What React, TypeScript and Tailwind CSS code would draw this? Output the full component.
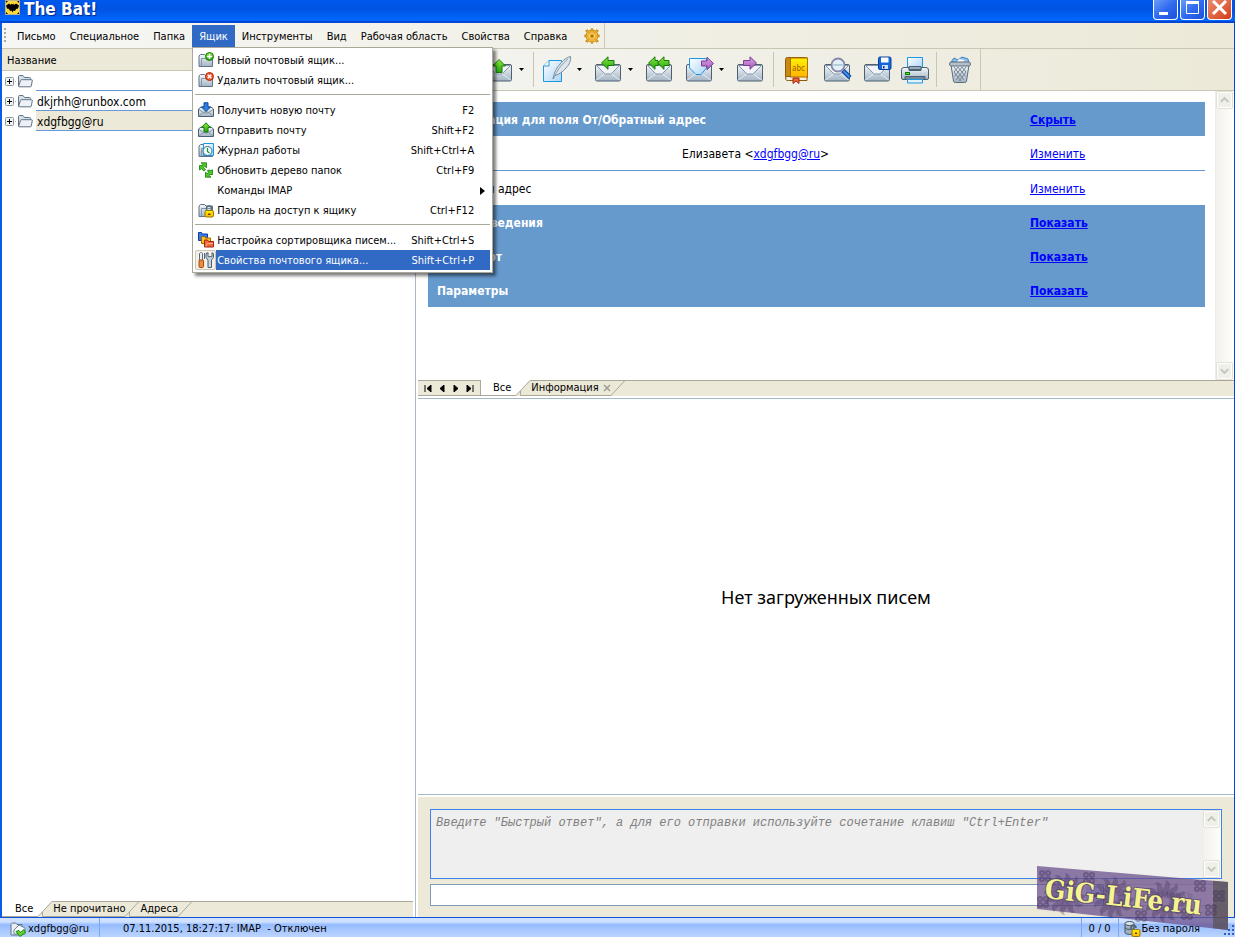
import { useState } from 'react'
import type { ReactNode } from 'react'
import clsx from 'clsx'

/* ─────────────── data ─────────────── */

type MenuEntry = { label: string; keys?: string; icon?: ReactNode; submenu?: boolean; active?: boolean } | null

const MENU_BEFORE = ['Письмо', 'Специальное', 'Папка']
const MENU_AFTER = ['Инструменты', 'Вид', 'Рабочая область', 'Свойства', 'Справка']

const MAILBOX_MENU: MenuEntry[] = [
  { label: 'Новый почтовый ящик...', icon: <FolderBadge kind="add" /> },
  { label: 'Удалить почтовый ящик...', icon: <FolderBadge kind="remove" /> },
  null,
  { label: 'Получить новую почту', keys: 'F2', icon: <SmallMail dir="down" /> },
  { label: 'Отправить почту', keys: 'Shift+F2', icon: <SmallMail dir="up" /> },
  { label: 'Журнал работы', keys: 'Shift+Ctrl+A', icon: <FolderBadge kind="log" /> },
  { label: 'Обновить дерево папок', keys: 'Ctrl+F9', icon: <RefreshIcon /> },
  { label: 'Команды IMAP', submenu: true },
  { label: 'Пароль на доступ к ящику', keys: 'Ctrl+F12', icon: <FolderBadge kind="lock" /> },
  null,
  { label: 'Настройка сортировщика писем...', keys: 'Shift+Ctrl+S', icon: <SorterIcon /> },
  { label: 'Свойства почтового ящика...', keys: 'Shift+Ctrl+P', icon: <ToolsIcon />, active: true },
]

const ACCOUNTS = [
  { id: 'empty', name: '' },
  { id: 'runbox', name: 'dkjrhh@runbox.com' },
  { id: 'ru', name: 'xdgfbgg@ru', selected: true },
]

/* ─────────────── page ─────────────── */

export default function App() {
  return (
    <div className="flex h-screen flex-col overflow-hidden bg-white font-['DejaVu_Sans_Condensed','Noto_Sans',sans-serif] text-[11px] leading-[14px] text-black">
      <Gradients />
      <TitleBar />
      <div className="flex min-h-0 flex-1 flex-col border-r border-l-2 border-r-[#0046e0] border-l-[#0a5be6]">
        <MenuBar />
        <div className="flex min-h-0 flex-1">
          <FolderPane />
          <main className="flex min-w-0 flex-1 flex-col border-l border-[#aabac8] pl-[2px]">
            <Toolbar />
            <AccountInfo />
            <MessageTabs />
            <section className="flex min-h-0 flex-1 items-center justify-center border-y border-[#a3b9c6] font-['Noto_Sans'] text-[18px]">
              Нет загруженных писем
            </section>
            <QuickReply />
          </main>
        </div>
      </div>
      <StatusBar />
    </div>
  )
}

function TitleBar() {
  return (
    <header className="flex h-[23px] shrink-0 items-start bg-linear-to-b from-[#0058ec] via-[#0054e4] via-45% to-[#0068ff] border-b-2 border-[#0046d6] pr-[3px] pl-[5px]">
      <BatLogo />
      <h1 className="ml-1 flex-1 text-[17px] leading-[18px] font-bold text-white [text-shadow:1px_1px_1px_#00258a]">
        The Bat!
      </h1>
      <div className="flex gap-[2px]">
        <WindowButton label="Свернуть">
          <rect x="5" y="12" width="9" height="3" fill="#fff" />
        </WindowButton>
        <WindowButton label="Развернуть">
          <path d="M5.500 2v11.500h12V2" fill="none" stroke="#fff" />
          <path d="M5 1h13v3H5z" fill="#fff" />
        </WindowButton>
        <WindowButton label="Закрыть" close>
          <path d="M5 1l13 13M18 1L5 14" stroke="#fff" strokeWidth="3" />
        </WindowButton>
      </div>
    </header>
  )
}

function WindowButton({ label, close, children }: { label: string; close?: boolean; children: ReactNode }) {
  return (
    <button
      aria-label={label}
      className={clsx(
        'h-5 w-[25px] rounded-b-[4px] border border-t-0 border-white',
        close ? 'bg-linear-to-br from-[#ee8a6c] to-[#d23a10]' : 'bg-linear-to-br from-[#6c9cf6] via-[#2f6af0] to-[#1e50d8]',
      )}
    >
      <svg width="23" height="19" viewBox="0 0 23 19">{children}</svg>
    </button>
  )
}

/* ─────────────── menu bar ─────────────── */

function MenuBar() {
  const [open, setOpen] = useState(true)
  return (
    <nav className="flex h-[26px] shrink-0 items-center border-b border-[#c9c6b4] bg-linear-to-r from-[#f6f6f4] to-[#ece9d8]">
      <div className="flex h-full items-center border-r border-[#cbc8b5] pr-1">
        <Grip />
        {MENU_BEFORE.map((m) => (
          <MenuButton key={m} label={m} />
        ))}
        <div className="relative">
          <MenuButton label="Ящик" active={open} onClick={() => setOpen((v) => !v)} />
          {open && <MailboxMenu />}
        </div>
        {MENU_AFTER.map((m) => (
          <MenuButton key={m} label={m} />
        ))}
        <button aria-label="RitLabs" className="ml-[10px]">
          <WheelIcon />
        </button>
      </div>
    </nav>
  )
}

function MenuButton({ label, active, onClick }: { label: string; active?: boolean; onClick?: () => void }) {
  return (
    <button
      onClick={onClick}
      className={clsx('h-[22px] px-[7px] pt-[2px] whitespace-nowrap', active && 'bg-[#316ac5] text-white')}
    >
      {label}
    </button>
  )
}

function MailboxMenu() {
  return (
    <div
      role="menu"
      className="absolute top-full left-0 z-20 w-[301px] border border-[#aca899] bg-white p-[2px] shadow-[3px_3px_3px_rgba(0,0,0,0.5)]"
    >
      {MAILBOX_MENU.map((item, i) =>
        item === null ? (
          <div key={i} role="separator" className="flex h-[10px] items-center">
            <div className="h-px flex-1 bg-[#aca899]" />
          </div>
        ) : (
          <button key={item.label} role="menuitem" className="flex h-5 w-full items-center text-left whitespace-nowrap">
            <span
              className={clsx(
                'flex h-5 w-[21px] shrink-0 items-center justify-center',
                item.active && 'rounded-[2px] border border-[#c9c6b4] bg-[#f3f1e8]',
              )}
            >
              {item.icon}
            </span>
            <span className={clsx('flex h-5 flex-1 items-center pt-[2px] pl-px', item.active && 'bg-[#316ac5] text-white')}>
              <span className="flex-1">{item.label}</span>
              <span className={clsx(item.submenu ? 'pr-[5px]' : 'pr-4')}>
                {item.submenu ? (
                  <svg width="5" height="8" viewBox="0 0 5 8"><path d="M0 0l5 4-5 4z" /></svg>
                ) : (
                  item.keys
                )}
              </span>
            </span>
          </button>
        ),
      )}
    </div>
  )
}

/* ─────────────── folders ─────────────── */

function FolderPane() {
  return (
    <aside className="mr-[2px] flex w-[411px] shrink-0 flex-col">
      <div className="flex h-[22px] shrink-0 items-center border-b border-[#c9c6b4] bg-[#ece9d8] pt-[2px] pl-[5px]">Название</div>
      <ul className="min-h-0 flex-1 text-[12px]">
        {ACCOUNTS.map((a) => (
          <li key={a.id} className="flex h-5 items-center pl-[3px]">
            <button aria-label={`Развернуть ${a.name}`}>
              <svg width="12" height="9" viewBox="0 0 12 9">
                <rect x=".5" y=".5" width="8" height="8" rx="1" fill="#f4f2ec" stroke="#8296ad" />
                <path d="M2 4.500h5M4.500 2v5" stroke="#000" />
                <path d="M10 4.500h1" stroke="#aca899" />
              </svg>
            </button>
            <FolderIcon />
            <span
              className={clsx(
                'ml-[3px] flex h-5 flex-1 items-center border-b border-[#6a97d8] pt-[2px] pl-px',
                a.selected && 'bg-[#ece9d8]',
              )}
            >
              {a.name}
            </span>
          </li>
        ))}
      </ul>
      <div className="flex h-4 shrink-0 bg-[#ece9d8]">
        <button className="border-b border-[#aca899] bg-white pr-[5px] pl-[13px]">Все</button>
        <TabEdge first />
        <SlantTab>Не прочитано</SlantTab>
        <TabEdge />
        <SlantTab>Адреса</SlantTab>
        <TabEdge last />
        <div className="flex-1 border-t border-[#aca899]" />
      </div>
    </aside>
  )
}

function SlantTab({ children }: { children: ReactNode }) {
  return (
    <button className="flex items-center gap-[4px] border-y border-[#aca899] pl-px whitespace-nowrap">{children}</button>
  )
}

function TabEdge({ first, last }: { first?: boolean; last?: boolean }) {
  return (
    <svg className="shrink-0" width="14" height="16" viewBox="0 0 14 16">
      {first && <path d="M0 0h14L0 15.500z" fill="#fff" />}
      <path d={first ? 'M0 15.500L14 .5' : 'M0 15.500L14 .5M0 .5h14'} fill="none" stroke="#aca899" />
      {!last && <path d="M4.500 11v4.500H14" fill="none" stroke="#aca899" />}
    </svg>
  )
}

/* ─────────────── toolbar ─────────────── */

function Toolbar() {
  return (
    <div className="flex h-[42px] shrink-0 border-b border-[#c9c6b4] bg-linear-to-r from-[#f4f4f1] to-[#ece9d8]">
      <div className="flex items-center border-r border-[#cbc8b5] pl-[10px]">
        <ToolButton label="Получить почту" menu><MailIcon badge="down" /></ToolButton>
        <ToolButton label="Отправить почту" menu><MailIcon badge="up" /></ToolButton>
        <ToolDivider />
        <ToolButton label="Новое письмо" menu><QuillIcon /></ToolButton>
        <ToolButton label="Ответить" menu><MailIcon badge="reply" /></ToolButton>
        <ToolButton label="Ответить всем"><MailIcon badge="replyAll" /></ToolButton>
        <ToolButton label="Переслать" menu><MailIcon badge="forward" /></ToolButton>
        <ToolButton label="Перенаправить"><MailIcon badge="redirect" /></ToolButton>
        <ToolDivider />
        <ToolButton label="Адресная книга"><BookIcon /></ToolButton>
        <ToolButton label="Просмотр"><MailIcon badge="search" /></ToolButton>
        <ToolButton label="Сохранить"><MailIcon badge="save" /></ToolButton>
        <ToolButton label="Печать" narrow><PrinterIcon /></ToolButton>
        <ToolDivider />
        <ToolButton label="Удалить"><TrashIcon /></ToolButton>
      </div>
    </div>
  )
}

function ToolButton({ label, menu, narrow, children }: { label: string; menu?: boolean; narrow?: boolean; children: ReactNode }) {
  return (
    <>
      <button aria-label={label} className={clsx('flex h-9 items-center justify-center', narrow ? 'w-9' : 'w-10')}>
        {children}
      </button>
      {menu && (
        <button aria-label={`${label}: меню`} className="mr-[3px] flex h-9 w-2 items-center">
          <svg width="5" height="3" viewBox="0 0 5 3"><path d="M0 0h5L2.500 3z" /></svg>
        </button>
      )}
    </>
  )
}

function ToolDivider() {
  return <div className="mx-[3px] h-[35px] w-px bg-[#c9c5b2]" />
}

function Grip() {
  return (
    <svg className="mr-[2px] ml-[2px]" width="4" height="16" viewBox="0 0 4 16" fill="#aba898">
      <path d="M0 0h2v2H0zM0 4h2v2H0zM0 8h2v2H0zM0 12h2v2H0z" />
    </svg>
  )
}

/* ─────────────── account info ─────────────── */

const LINK = 'text-[#0000ff] underline'

function AccountInfo() {
  return (
    <section className="flex h-[289px] shrink-0">
      <div className="min-w-0 flex-1 px-[10px] pt-[11px]">
        <table className="w-full table-fixed border-collapse text-[12px] [&_td]:px-[9px] [&_td]:pt-[2px] [&_th]:px-[9px] [&_th]:pt-[2px]">
          <colgroup>
            <col />
            <col className="w-[348px]" />
            <col className="w-[184px]" />
          </colgroup>
          <tbody>
            <BandRow title="Информация для поля От/Обратный адрес" action="Скрыть" />
            <tr className="h-[34px] border-b border-[#6699cc]">
              <td>Имя</td>
              <td>
                Елизавета &lt;<a href="#mail" className={LINK}>xdgfbgg@ru</a>&gt;
              </td>
              <td><a href="#name" className={LINK}>Изменить</a></td>
            </tr>
            <tr className="h-[35px]">
              <td>Обратный адрес</td>
              <td />
              <td><a href="#reply" className={LINK}>Изменить</a></td>
            </tr>
            <BandRow title="Общие сведения" action="Показать" />
            <BandRow title="Транспорт" action="Показать" />
            <BandRow title="Параметры" action="Показать" />
          </tbody>
        </table>
      </div>
      <ScrollTrack />
    </section>
  )
}

function BandRow({ title, action }: { title: string; action: string }) {
  return (
    <tr className="h-[34px] bg-[#6699cc] font-bold">
      <th colSpan={2} className="text-left text-white">{title}</th>
      <td><a href="#section" className={LINK}>{action}</a></td>
    </tr>
  )
}

function ScrollTrack() {
  return (
    <div className="flex w-[19px] shrink-0 flex-col justify-between border-l border-[#eeede5] bg-linear-to-r from-[#f3f1ec] to-[#fefefb]">
      <ScrollButton label="Вверх" d="M4 10l4-4 4 4" />
      <ScrollButton label="Вниз" d="M4 6l4 4 4-4" />
    </div>
  )
}

function ScrollButton({ label, d }: { label: string; d: string }) {
  return (
    <button
      aria-label={label}
      className="flex h-[18px] w-[17px] items-center justify-center rounded-[2px] border border-[#e2e1d4] bg-[#f0f0ea] ring-1 ring-white ring-inset"
    >
      <svg width="15" height="16" viewBox="0 0 16 16">
        <path d={d} fill="none" stroke="#c6c5ba" strokeWidth="2.2" />
      </svg>
    </button>
  )
}

function MessageTabs() {
  return (
    <div className="mb-[2px] flex h-4 shrink-0 bg-[#ece9d8]">
      <div className="flex w-[63px] items-center justify-between border border-l-0 border-[#aca899] px-[6px]">
        <NavButton label="Первая" d="M1 0v7M7 0v7L3 3.500z" />
        <NavButton label="Назад" d="M6 0v7L2 3.500z" />
        <NavButton label="Вперёд" d="M2 0v7l4-3.500z" />
        <NavButton label="Последняя" d="M7 0v7M1 0v7l4-3.500z" />
      </div>
      <button className="border-b border-[#aca899] bg-white pr-[5px] pl-3">Все</button>
      <TabEdge first />
      <SlantTab>
        Информация
        <svg width="8" height="8" viewBox="0 0 8 8"><path d="M1 1l6 6M7 1L1 7" stroke="#a19f93" strokeWidth="1.600" /></svg>
      </SlantTab>
      <TabEdge last />
      <div className="flex-1 border-t border-[#aca899]" />
    </div>
  )
}

function NavButton({ label, d }: { label: string; d: string }) {
  return (
    <button aria-label={label}>
      <svg width="8" height="7" viewBox="0 0 8 7"><path d={d} fill="#000" stroke="#000" strokeWidth="1" /></svg>
    </button>
  )
}

/* ─────────────── quick reply ─────────────── */

function QuickReply() {
  return (
    <form className="relative mt-[2px] shrink-0 bg-[#ece9d8] px-3 pt-3 pb-[11px]">
      <div className="flex h-[70px] border border-[#3b82f0] bg-[#efefef]">
        <textarea
          aria-label="Быстрый ответ"
          className="min-w-0 flex-1 resize-none overflow-hidden px-[5px] py-[6px] font-['Liberation_Mono',monospace] text-[12px] leading-[15px] text-[#808080] italic outline-none placeholder:text-[#808080]"
          placeholder={'Введите "Быстрый ответ", а для его отправки используйте сочетание клавиш "Ctrl+Enter"'}
        />
        <ScrollTrack />
      </div>
      <div className="mt-[5px] flex h-[22px] gap-1">
        <div className="relative flex-1">
          <select aria-label="Шаблон" className="h-full w-full appearance-none border border-[#7f9db9] bg-white" />
          <span className="pointer-events-none absolute inset-y-[2px] right-[2px] flex w-4 items-center justify-center rounded-[2px] bg-[#c6d5f9]">
            <svg width="9" height="6" viewBox="0 0 9 6"><path d="M.5.5l4 4 4-4" fill="none" stroke="#4d6185" strokeWidth="2" /></svg>
          </span>
        </div>
        <button type="button" disabled className="w-[114px] rounded-[2px] border border-[#c9c7ba] bg-[#f5f4ea] text-[#a1a192]">
          Отправить
        </button>
      </div>
      <Watermark />
    </form>
  )
}

function Watermark() {
  return (
    <svg className="pointer-events-none absolute right-[5px] bottom-[-14px] z-10" width="192" height="65" viewBox="0 0 192 65">
      <path d="M0 0l191 16v48L0 43z" fill="#69508c" fillOpacity=".75" />
      <path d="M176 14.700l15 1.300v48l-15-1.700z" fill="#55504e" fillOpacity=".65" />
      <g fill="#3b2c56" fillOpacity=".3">
        {[28, 76, 128].map((x) => (
          <g key={x} transform={`translate(${x} ${26 + x / 14})`}>
            {[0, 30, 60, 90, 120, 150, 180, 210, 240, 270, 300, 330].map((a) => (
              <path key={a} d="M0-4c4-3 2-7 5-10 1-3-1-7-5-7 2 3 0 5-2 8s-1 6 2 9z" transform={`rotate(${a})`} />
            ))}
          </g>
        ))}
        {[[163, 20], [150, 48], [174, 44], [182, 30], [8, 10], [6, 36], [52, 12], [104, 50]].map(([x, y]) => (
          <g key={x} transform={`translate(${x} ${y})`} fill="none" stroke="#3b2c56" strokeOpacity=".4" strokeWidth="2">
            <circle cx="-3" cy="-3" r="2" />
            <circle cx="3" cy="-3" r="2" />
            <circle cx="-3" cy="3" r="2" />
            <circle cx="3" cy="3" r="2" />
          </g>
        ))}
      </g>
      <text
        x="7"
        y="32"
        transform="rotate(6 7 32)"
        fontFamily="DejaVu Serif Condensed, DejaVu Serif, serif"
        fontWeight="700"
        fontSize="27"
        fill="#f6f48e"
        stroke="#4a3a5c"
        strokeOpacity=".6"
        strokeWidth="2"
        paintOrder="stroke"
      >
        GiG-LiFe.ru
      </text>
    </svg>
  )
}

function StatusBar() {
  return (
    <footer className="flex h-5 shrink-0 items-center border-t border-[#0a56d6] bg-linear-to-b from-[#cfe1ff] from-20% via-[#96bcff] via-35% to-[#bcd5ff] pl-[10px]">
      <div className="flex h-full w-[90px] items-center gap-[2px] border-r border-[#7da7ee] pt-[2px]">
        <SyncFolderIcon />
        xdgfbgg@ru
      </div>
      <div className="flex h-full flex-1 items-center pt-[2px] pl-[23px] whitespace-pre">07.11.2015, 18:27:17: IMAP  - Отключен</div>
      <div className="flex h-full w-[38px] items-center justify-center border-x border-[#7da7ee] pt-[2px]">0 / 0</div>
      <div className="flex h-full items-center pt-[2px] pl-[5px]">
        <DatabaseLockIcon />
        Без пароля
      </div>
      <svg className="ml-[22px] self-end" width="13" height="13" viewBox="0 0 13 13" fill="#2c5fc4">
        <path d="M10 1h2v2h-2zM10 5h2v2h-2zM6 5h2v2H6zM10 9h2v2h-2zM6 9h2v2H6zM2 9h2v2H2z" />
      </svg>
    </footer>
  )
}

/* ─────────────── icons ─────────────── */

// shared paint servers, referenced by id from every icon below
function Gradients() {
  return (
    <svg className="absolute" width="0" height="0" aria-hidden>
      <defs>
        <linearGradient id="steel" x1="0" y1="0" x2="0" y2="1">
          <stop offset="0" stopColor="#f4f8fb" />
          <stop offset="1" stopColor="#a3b4c4" />
        </linearGradient>
        <linearGradient id="green" x1="0" y1="0" x2="0" y2="1">
          <stop offset="0" stopColor="#8be83c" />
          <stop offset="1" stopColor="#23a512" />
        </linearGradient>
        <linearGradient id="purple" x1="0" y1="0" x2="0" y2="1">
          <stop offset="0" stopColor="#dda4ea" />
          <stop offset="1" stopColor="#a457b5" />
        </linearGradient>
        <linearGradient id="paper" x1="0" y1="0" x2="1" y2="1">
          <stop offset="0" stopColor="#ffffff" />
          <stop offset="1" stopColor="#a9d4f7" />
        </linearGradient>
        <linearGradient id="gold" x1="0" y1="0" x2="0" y2="1">
          <stop offset="0" stopColor="#fff200" />
          <stop offset="1" stopColor="#ffb400" />
        </linearGradient>
      </defs>
    </svg>
  )
}

type Badge = 'down' | 'up' | 'reply' | 'replyAll' | 'forward' | 'redirect' | 'search' | 'save'

function MailIcon({ badge }: { badge: Badge }) {
  return (
    <svg width="30" height="28" viewBox="0 0 30 28">
      <path d="M4 8.500h22a1.500 1.500 0 011.500 1.500v13.500A1.500 1.500 0 0126 25H4a1.500 1.500 0 01-1.500-1.500V10A1.500 1.500 0 014 8.500z" fill="url(#steel)" stroke="#4d6173" />
      {badge === 'forward' ? (
        <path d="M5.500 12V2.500h17V12L17 18.500h-5z" fill="url(#paper)" stroke="#1f97e0" />
      ) : (
        <path d="M3.500 9.500L12 18h6l8.500-8.500z" fill="#f0f4f8" stroke="#8797a7" />
      )}
      <path d="M3.500 24l8-6M26.500 24l-8-6" stroke="#e6edf3" />
      {badge === 'down' && <path d="M15 15L9 8.500h3.500V1.500h5v7H21z" fill="#2f7fe0" stroke="#0b4499" />}
      {badge === 'up' && <path d="M15 3.500l6.500 6.500H18v6.500h-6V10H8.500z" fill="url(#green)" stroke="#147a0a" />}
      {badge === 'reply' && <path d="M8.500 7L15 .8v3.700h6v5h-6v3.800z" fill="url(#green)" stroke="#147a0a" />}
      {badge === 'replyAll' && (
        <>
          <path d="M13.500 7L20 .8v3.700h5v5h-5v3.800z" fill="url(#green)" stroke="#147a0a" />
          <path d="M4.500 7L11 .8v3.700h3v5h-3v3.800z" fill="url(#green)" stroke="#147a0a" />
        </>
      )}
      {badge === 'forward' && <path d="M29.500 7.500L23 1.300V5h-5.500v5H23v3.700z" fill="url(#purple)" stroke="#7a3f8c" />}
      {badge === 'redirect' && <path d="M21.500 7L15 .8v3.700H8.500v5H15v3.800z" fill="url(#purple)" stroke="#7a3f8c" />}
      {badge === 'search' && (
        <>
          <path d="M21 14.500l7 7" stroke="#0b4499" strokeWidth="4.500" />
          <path d="M21.500 15l6 6" stroke="#3e93ee" strokeWidth="2" />
          <circle cx="16" cy="9" r="6.500" fill="#dff0f8" fillOpacity=".9" stroke="#8a86a8" strokeWidth="1.800" />
          <path d="M11.500 9h9" stroke="#8fb7c4" />
        </>
      )}
      {badge === 'save' && (
        <>
          <rect x="16.500" y="1" width="12.500" height="12.500" rx="1.500" fill="#1668d8" stroke="#0b3f98" />
          <path d="M19 1.500h7.500v5H19z" fill="#fff" />
          <path d="M20 9h6v4h-6z" fill="#cfe0f5" />
          <path d="M21 10h1.500v2.500H21z" fill="#0b3f98" />
        </>
      )}
    </svg>
  )
}

function QuillIcon() {
  return (
    <svg width="30" height="28" viewBox="0 0 30 28">
      <path d="M7 4.500h12.500v21h-18V10z" fill="url(#paper)" stroke="#1f97e0" />
      <path d="M7 4.500V10H1.500" fill="#fff" stroke="#1f97e0" />
      <path d="M11 23c1-5 2-9 6-13.500C20 5 24 1.500 28.500.5c.5 4-1 8-4.500 11.500-3.500 4-7 6.500-11 7.500z" fill="#dde5ec" stroke="#7b8c9b" />
      <path d="M11.500 22.500C15 14 20 8 26 3" fill="none" stroke="#8d9dab" />
    </svg>
  )
}

function BookIcon() {
  return (
    <svg width="26" height="30" viewBox="0 0 26 30">
      <rect x="1.500" y="2.500" width="22" height="21" rx="2" fill="#c98a12" stroke="#8f5a05" />
      <path d="M3 21.500h20v4H4.500a2 2 0 01-1.500-4z" fill="#f4f0e0" stroke="#8f5a05" />
      <rect x="6.500" y="3" width="17" height="19" fill="url(#gold)" stroke="#a96f08" />
      <text x="8" y="16" fontFamily="DejaVu Sans Condensed, Noto Sans" fontSize="8" fill="#9a5c00">abc</text>
      <path d="M9 23h6v5.500l-3-2.500-3 2.500z" fill="#f0653a" stroke="#a02a10" />
    </svg>
  )
}

function PrinterIcon() {
  return (
    <svg width="30" height="28" viewBox="0 0 30 28">
      <path d="M7.500 1.500h15V12h-15z" fill="url(#paper)" stroke="#1f97e0" />
      <path d="M4 11.500h5v3h12v-3h5a2.500 2.500 0 012.500 2.500v8a1.500 1.500 0 01-1.500 1.500H3A1.500 1.500 0 011.500 22v-8A2.500 2.500 0 014 11.500z" fill="url(#steel)" stroke="#4d6173" />
      <path d="M9 10.500h12v3H9z" fill="#9aabbb" stroke="#4d6173" />
      <path d="M5 20.500h20v3H5z" fill="#75879a" stroke="#4d6173" />
      <rect x="5.500" y="16.500" width="4" height="2" fill="#51e02a" stroke="#147a0a" />
      <path d="M7.500 23.500h15v3.500h-15z" fill="#e2f2fd" stroke="#1f97e0" />
    </svg>
  )
}

function TrashIcon() {
  return (
    <svg width="24" height="28" viewBox="0 0 24 28">
      <path d="M3 6l3-4 4 2 4-3 6 2 1 4z" fill="#8fc0ee" stroke="#3d80c4" />
      <path d="M9 6l2-3 5 1 1 3z" fill="#fff" />
      <path d="M3 9h18l-2.500 16a2 2 0 01-2 1.500h-9a2 2 0 01-2-1.500z" fill="url(#steel)" stroke="#5c6b79" />
      <path d="M6 11l10 13M10 11l7.500 9.500M14 11l4 5M6 16l7 9M18 11L8 24M14 11l-7.500 9.500M10 11l-4 5M18 16l-7 9" stroke="#6f7e8c" strokeWidth=".9" />
      <rect x="1.500" y="6" width="21" height="4" rx="2" fill="#b4c0ca" stroke="#5c6b79" />
    </svg>
  )
}

function FolderIcon() {
  return (
    <svg className="shrink-0" width="16" height="16" viewBox="0 0 16 16">
      <path d="M1.500 13V3.500a1 1 0 011-1h3.500l1.500 2h5a1 1 0 011 1V7" fill="#d5dee6" stroke="#5f7488" />
      <path d="M1.500 13.500L3.500 7.500a1 1 0 011-.8h10a.8.8 0 01.8 1L14.300 13a1 1 0 01-1 .8H2z" fill="#eef2f6" stroke="#5f7488" />
    </svg>
  )
}

function FolderBadge({ kind }: { kind: 'add' | 'remove' | 'log' | 'lock' }) {
  return (
    <svg width="16" height="16" viewBox="0 0 16 16">
      <path d="M1 14.500V4L2.500 2.500h4L8 4h6.500v10.500z" fill="url(#steel)" stroke="#5f7488" />
      <path d="M3.500 14V6.500H14" fill="none" stroke="#8395a6" />
      {kind === 'add' && (
        <>
          <circle cx="11.500" cy="4.500" r="4" fill="url(#green)" stroke="#147a0a" />
          <path d="M9 4.500h5M11.500 2v5" stroke="#fff" strokeWidth="1.500" />
        </>
      )}
      {kind === 'remove' && (
        <>
          <circle cx="11.500" cy="4.500" r="4" fill="#ee5a30" stroke="#b0260c" />
          <path d="M9.700 2.700l3.600 3.600M13.300 2.700L9.700 6.300" stroke="#fff" strokeWidth="1.500" />
        </>
      )}
      {kind === 'log' && (
        <>
          <path d="M5.500 1.500h10v12h-10z" fill="url(#paper)" stroke="#1f97e0" />
          <circle cx="9.500" cy="9" r="4.500" fill="#f0faff" stroke="#2f6d92" />
          <path d="M9.500 6v3.500l2 1.500" fill="none" stroke="#1a9a1a" strokeWidth="1.200" />
        </>
      )}
      {kind === 'lock' && (
        <>
          <path d="M8.500 9V6.500a2.500 2.500 0 015 0V9" fill="none" stroke="#5c6b79" strokeWidth="1.500" />
          <rect x="7" y="8.500" width="8.500" height="6.500" rx="1.500" fill="url(#gold)" stroke="#96750a" />
          <path d="M10 11.500h2.500v1.500H10z" fill="#5c4600" />
        </>
      )}
    </svg>
  )
}

function SmallMail({ dir }: { dir: 'up' | 'down' }) {
  return (
    <svg width="16" height="16" viewBox="0 0 16 16">
      <path d="M.5 7L3 5h10l2.500 2v7.500H.5z" fill="url(#steel)" stroke="#4d6173" />
      <path d="M1 14l5-4h4l5 4M1 7.500l5 3.500h4l5-3.500" fill="none" stroke="#8797a7" />
      {dir === 'down' ? (
        <path d="M8 9.500L3.500 5H6V.8h4V5h2.500z" fill="#2f7fe0" stroke="#0b4499" />
      ) : (
        <path d="M8 .8L12.500 5.500H10V10H6V5.500H3.500z" fill="url(#green)" stroke="#147a0a" />
      )}
    </svg>
  )
}

// two arrows: up-left to down-right pair
function RefreshIcon() {
  return (
    <svg width="16" height="16" viewBox="0 0 16 16" fill="#4cc928" stroke="#147a0a" strokeWidth=".8">
      <path d="M3 .8h5.500v5L6.800 4.400 5.500 5.700 7.500 7.700 5.800 9 3.500 6.700 1.500 8V3.500h3l.5-.8z" />
      <path d="M13 15.200H7.500v-5l1.700 1.400 1.300-1.300-1-1.800L12 8l.5.800 2-1v4.700h-3l-.5.900z" />
    </svg>
  )
}

function SorterIcon() {
  return (
    <svg width="16" height="16" viewBox="0 0 16 16">
      <path d="M.5 8.500v-8h3l1 1.500h5v6.500z" fill="#3a78e8" stroke="#0c3e9c" />
      <path d="M3.500 11.500v-7h3l1 1.500h5v5.500z" fill="#ffc21f" stroke="#a06a05" />
      <path d="M6.500 15V8h3l1 1.500h5V15z" fill="#ee6a38" stroke="#a52510" />
      <path d="M8 14.500l1-3h6" fill="none" stroke="#ffb08a" />
    </svg>
  )
}

function ToolsIcon() {
  return (
    <svg width="16" height="16" viewBox="0 0 16 16">
      <path d="M1.500 1.500l1-1h1l1 1v7h-3z" fill="#e8edf1" stroke="#5c6b79" />
      <rect x="1" y="8" width="4.500" height="7.500" rx="1" fill="#f08a3c" stroke="#a24a10" />
      <path d="M6.500 1v6" stroke="#5c6b79" />
      <path d="M8 1.500v4l2 2.500v7.500h3.500V8l2-2.500v-4l-1.500-.8v4h-4v-4z" fill="#c9d4dd" stroke="#4d6173" />
    </svg>
  )
}

function WheelIcon() {
  return (
    <svg width="16" height="16" viewBox="0 0 16 16">
      <g stroke="#a9700c" strokeWidth="2.500">
        <path d="M8 .5v15M.5 8h15M2.200 2.200l11.600 11.600M13.800 2.200L2.200 13.800" />
      </g>
      <circle cx="8" cy="8" r="5" fill="#fbe7a0" stroke="#a9700c" strokeWidth="2.500" />
      <circle cx="8" cy="8" r="5" fill="none" stroke="#ffc93a" strokeWidth="1.200" />
      <path d="M8 1v14M1 8h14M2.500 2.500l11 11M13.500 2.500l-11 11" stroke="#f5b21e" strokeWidth="1.200" />
      <circle cx="8" cy="8" r="1.500" fill="#a9700c" />
    </svg>
  )
}

function SyncFolderIcon() {
  return (
    <svg width="16" height="16" viewBox="0 0 16 16">
      <path d="M1 14V3.500L2.500 2h3L7 3.500h5V14z" fill="#e8eef3" stroke="#5f7488" />
      <path d="M4 9l5-5 6 3v6H4z" fill="#f6f9fb" stroke="#6f8496" />
      <path d="M6 10.500l3-1 1.500 2L14 8.500l1.500 3L10 15.500z" fill="#62d62e" stroke="#1c8a12" />
    </svg>
  )
}

function DatabaseLockIcon() {
  return (
    <svg className="mr-px" width="17" height="16" viewBox="0 0 17 16">
      <path d="M1 2.500v9c0 2.500 9 2.500 9 0v-9z" fill="#9fb0be" stroke="#3f5364" />
      <ellipse cx="5.500" cy="2.500" rx="4.500" ry="2" fill="#dfe7ed" stroke="#3f5364" />
      <path d="M1 6.500c0 2.500 9 2.500 9 0" fill="none" stroke="#3f5364" />
      <path d="M7 9V7a2.500 2.500 0 015 0" fill="none" stroke="#4d6173" strokeWidth="1.500" />
      <rect x="8" y="8.500" width="8" height="7" rx="1.500" fill="url(#gold)" stroke="#96750a" />
      <path d="M11 11.500h2V13h-2z" fill="#5c4600" />
    </svg>
  )
}

function BatLogo() {
  return (
    <svg width="15" height="15" viewBox="0 0 15 15">
      <rect width="15" height="15" fill="#000" />
      <rect x=".5" y=".5" width="14" height="14" fill="#ffd83a" stroke="#fff" strokeDasharray="1 1" />
      <path d="M1 1h2L1 3zM14 1v2l-2-2zM1 14v-2l2 2zM14 14h-2l2-2z" fill="#000" />
      <path d="M1 5.500l3-2L6 5l.5-1.500 1 1 1-1L9 5l2-1.500 3 2-1 3-2 .5-1 2-1.500-.5-1 2-1-2-1.500.5-1-2-2-.5z" fill="#000" />
    </svg>
  )
}
